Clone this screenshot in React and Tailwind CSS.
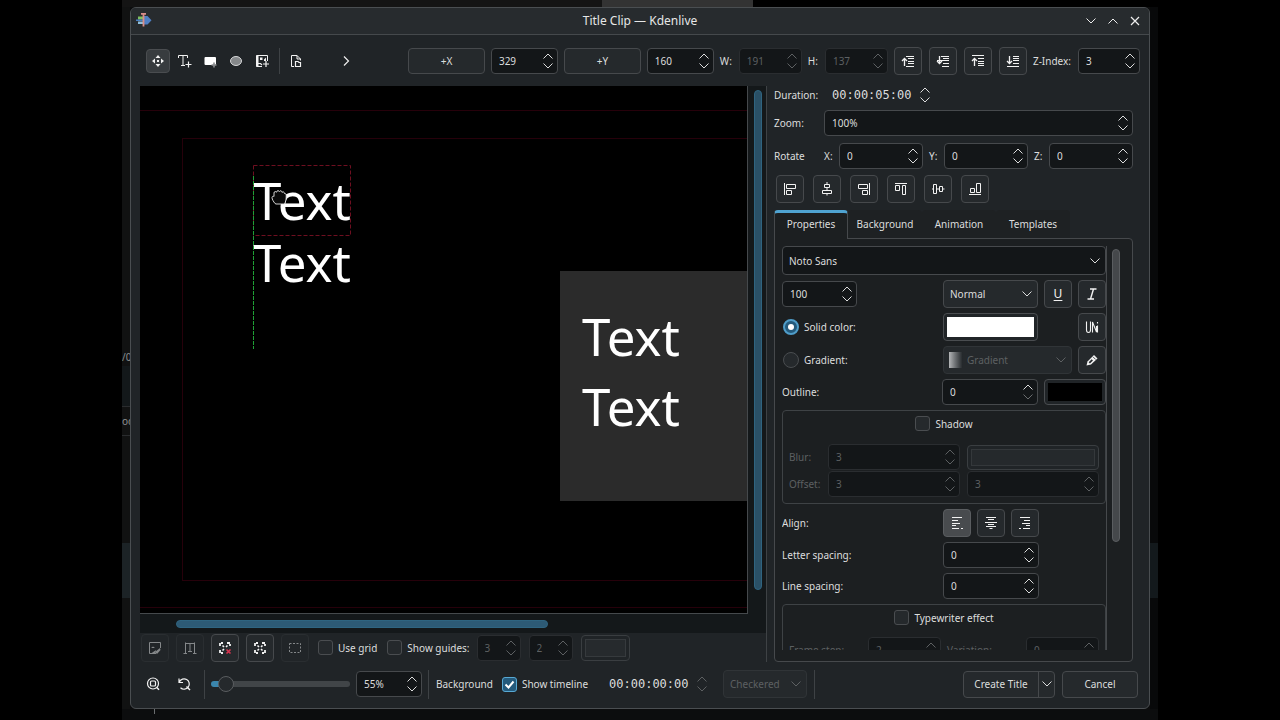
import React, { useState } from 'react';
import clsx from 'clsx';

function Chevron({ up, className }) {
  return (
    <svg viewBox="0 0 10 6" className={clsx('w-2.5 h-1.5 fill-none stroke-current', className)}>
      <path d={up ? 'M0.5 5.5 L5 1 L9.5 5.5' : 'M0.5 0.5 L5 5 L9.5 0.5'} />
    </svg>
  );
}

function Arrows({ disabled, atMin, onStep }) {
  return (
    <span className={clsx('flex flex-col gap-1 shrink-0', disabled ? 'text-[#5d6062]' : 'text-[#dcdddd]')}>
      <button type="button" aria-label="Increase" disabled={disabled} onClick={() => onStep?.(1)} className="block">
        <Chevron up />
      </button>
      <button type="button" aria-label="Decrease" disabled={disabled} onClick={() => onStep?.(-1)} className="block">
        <Chevron className={atMin ? 'text-[#6a6d6f]' : ''} />
      </button>
    </span>
  );
}

function Spin({ id, label, initial, suffix = '', disabled, atMin, className }) {
  const [value, setValue] = useState(initial);

  return (
    <div
      className={clsx(
        'flex items-center h-[26px] pl-[7px] pr-1 rounded border bg-[#131618]',
        disabled ? 'border-[#2a2d30] text-[#5d6062]' : 'border-[#46494c] text-[#dcdddd]',
        className
      )}
    >
      <input
        id={id}
        type="text"
        aria-label={label}
        value={`${value}${suffix}`}
        disabled={disabled}
        onChange={(e) => setValue(parseInt(e.target.value, 10) || 0)}
        className="flex-1 min-w-0 w-0 bg-transparent outline-none"
      />
      <Arrows disabled={disabled} atMin={atMin} onStep={(d) => setValue((v) => v + d)} />
    </div>
  );
}

function IconButton({ label, children, disabled, active, className }) {
  return (
    <button
      type="button"
      aria-label={label}
      title={label}
      disabled={disabled}
      className={clsx(
        'flex items-center justify-center w-7 h-7 shrink-0 rounded border',
        active && 'bg-[#484b4e] border-[#5a5d60] text-[#f2f2f2]',
        !active && !disabled && 'bg-[#25292c] border-[#46494c] text-[#f2f2f2]',
        disabled && 'bg-[#212528] border-[#2a2e31] text-[#85888a]',
        className
      )}
    >
      {children}
    </button>
  );
}

function ToolButton({ label, active, children }) {
  return (
    <button
      type="button"
      aria-label={label}
      title={label}
      className={clsx(
        'flex items-center justify-center size-6 rounded border text-[#f2f2f2]',
        active ? 'bg-[#383c3f] border-[#4a4d50]' : 'border-transparent'
      )}
    >
      {children}
    </button>
  );
}

function Select({ id, label, options, disabled, className, tall, dark, children }) {
  return (
    <div className={clsx('relative', className)}>
      {children}
      <select
        id={id}
        aria-label={label}
        disabled={disabled}
        className={clsx(
          'appearance-none w-full rounded border pr-5 outline-none',
          tall ? 'h-[29px]' : 'h-7',
          dark ? 'bg-[#131618]' : 'bg-[#25292c]',
          children ? 'pl-[23px]' : 'pl-[6px]',
          disabled ? 'border-[#303437] text-[#5d6062] opacity-100' : 'border-[#46494c] text-[#dcdddd]'
        )}
      >
        {options.map((o) => (
          <option key={o}>{o}</option>
        ))}
      </select>
      <Chevron
        className={clsx(
          'absolute right-1.5 top-1/2 -translate-y-1/2 pointer-events-none',
          disabled ? 'text-[#5d6062]' : 'text-[#dcdddd]'
        )}
      />
    </div>
  );
}

function CheckBox({ id, label, defaultChecked }) {
  return (
    <div className="flex items-center gap-[5px]">
      <span className="relative flex size-[15px]">
        <input
          id={id}
          type="checkbox"
          defaultChecked={defaultChecked}
          className="peer appearance-none size-[15px] rounded-[3px] border border-[#4a4d50] bg-[#25292c] checked:bg-[#245a7c] checked:border-[#58a9d4]"
        />
        <svg
          viewBox="0 0 15 15"
          className="absolute inset-0 size-[15px] fill-none stroke-white stroke-2 pointer-events-none opacity-0 peer-checked:opacity-100"
        >
          <path d="M3.5 7.5 L6.5 10.5 L11.5 4.5" />
        </svg>
      </span>
      <label htmlFor={id}>{label}</label>
    </div>
  );
}

function Radio({ id, label, defaultChecked }) {
  return (
    <div className="flex items-center gap-[5px] pl-px">
      <span className="relative flex items-center justify-center size-4">
        <input
          id={id}
          type="radio"
          name="fill"
          defaultChecked={defaultChecked}
          className="peer appearance-none size-4 rounded-full border border-[#4a4d50] bg-[#25292c] checked:bg-[#245a7c] checked:border-2 checked:border-[#4f9dc9]"
        />
        <span className="absolute size-1.5 rounded-full bg-white pointer-events-none opacity-0 peer-checked:opacity-100" />
      </span>
      <label htmlFor={id}>{label}</label>
    </div>
  );
}

function ColorButton({ label, color, disabled, className }) {
  return (
    <button
      type="button"
      aria-label={label}
      disabled={disabled}
      className={clsx(
        'flex p-[3px] rounded border bg-[#202427]',
        disabled ? 'border-[#3a3e41]' : 'border-[#4a4d50]',
        className
      )}
    >
      <span className={clsx('flex-1 self-stretch', color)} />
    </button>
  );
}

function Icon({ children, size = 'size-4' }) {
  return (
    <svg viewBox="0 0 16 16" className={clsx(size, 'fill-none stroke-current')}>
      {children}
    </svg>
  );
}

function TitleBar() {
  return (
    <header className="relative flex items-center justify-end h-[27px] shrink-0 px-2 rounded-t-[5px] bg-[#272b2e] border-b border-[#45494c]">
      <svg viewBox="0 0 18 18" className="absolute left-1 top-[3px] size-[18px]">
        <path d="M3 5.5h6v3H3z" fill="#7fbf5f" />
        <path d="M1 8.5h8V10H1z" fill="#4a7fc0" />
        <path d="M3 10.5h6v2.5H3z" fill="#8fc0dc" />
        <path d="M9 5 H12.5 L16.5 9.3 L12.5 13.5 H9z" fill="#4f7fc4" />
        <path d="M6 2h5v1.8H9.4V15.5H7.6V3.8H6z" fill="#d98d88" />
      </svg>
      <h1 className="absolute inset-x-0 text-center text-[12px] leading-[26px] text-[#e6e7e7] pointer-events-none">
        Title Clip — Kdenlive
      </h1>
      <div className="flex items-center gap-2.5 text-[#eeeeee]">
        <button type="button" aria-label="Minimize" className="w-3"><Chevron className="w-3" /></button>
        <button type="button" aria-label="Maximize" className="w-3"><Chevron up className="w-3" /></button>
        <button type="button" aria-label="Close" className="w-3">
          <svg viewBox="0 0 12 12" className="size-3 fill-none stroke-current">
            <path d="M2 2 L10 10 M10 2 L2 10" strokeWidth="1.2" />
          </svg>
        </button>
      </div>
    </header>
  );
}

// Raise / lower arrows next to a stack of lines
function OrderIcon({ up, edge }) {
  return (
    <Icon>
      <path d={up ? 'M4.5 13 V6 M2 8 L4.5 5.5 L7 8' : 'M4.5 3 V10 M2 8 L4.5 10.5 L7 8'} strokeWidth="1.3" />
      {edge && up && <path d="M2 2.5 H14 M8 5.5 H14 M8 8.5 H14 M8 10.5 H14 M8 12.5 H14" />}
      {edge && !up && <path d="M2 13.5 H14 M8 3.5 H14 M8 5.5 H14 M8 7.5 H14 M8 10.5 H14" />}
      {!edge && up && <path d="M6 3.5 H14 M8 5.5 H14 M8 8.5 H14 M8 10.5 H14 M6 13.5 H14" />}
      {!edge && !up && <path d="M6 3.5 H14 M8 5.5 H14 M2 7.5 H14 M8 10.5 H14 M7 13.5 H14" />}
    </Icon>
  );
}

function Toolbar() {
  return (
    <div className="flex items-center h-[51px] shrink-0 pl-[15px] pr-[9px]">
      <div className="flex items-center gap-0.5">
        <ToolButton label="Selection tool" active>
          <Icon>
            <g className="fill-current stroke-none">
              <path d="M8 2 L10.5 5 H5.5z M8 14 L10.5 11 H5.5z M2 8 L5 5.5 V10.5z M14 8 L11 5.5 V10.5z" />
              <path d="M7 7h2v2H7z" />
            </g>
          </Icon>
        </ToolButton>
        <ToolButton label="Add text">
          <Icon>
            <path d="M2.5 5 V2.5 H11.5 V5 M7 2.5 V12.5 M5 12.5 H9" />
            <path d="M12.5 8.5 V14.5 M9.5 11.5 H15.5" strokeWidth="1.2" />
          </Icon>
        </ToolButton>
        <ToolButton label="Add rectangle">
          <Icon>
            <rect x="2.5" y="4" width="11.5" height="8" rx="1" className="fill-white stroke-none" />
            <path d="M12 9.5 V14.5 M9.5 12 H14.5" stroke="#8a8c8e" strokeWidth="1.6" />
          </Icon>
        </ToolButton>
        <ToolButton label="Add ellipse">
          <Icon>
            <ellipse cx="8" cy="8" rx="5.5" ry="4.5" className="fill-[#85888a]" stroke="#d5d6d7" />
          </Icon>
        </ToolButton>
        <ToolButton label="Add image">
          <Icon>
            <path d="M8 13.5 H2.5 V2.5 H13.5 V8" />
            <path d="M2.5 2.5 H4.5 V13.5 H2.5z M6 4.5 H8.5 V7 H6z M10 6.5 L12 4.5 V8 H10z" className="fill-current stroke-none" />
            <path d="M4 10.5 H6.5 L8 12 M12 8 V14 M9 11 H15" strokeWidth="1.2" />
          </Icon>
        </ToolButton>
      </div>
      <div className="w-px h-[26px] ml-[5px] mr-1 bg-[#3e4245]" />
      <ToolButton label="Open document">
        <Icon>
          <path d="M6 13.5 H3.5 V2.5 H9 L12.5 6 V7.5 M9 2.5 V6 H12.5" />
          <path d="M7.5 13.5 V8.5 H10 L11 9.5 H12.5 V13.5z" strokeWidth="1.2" />
        </Icon>
      </ToolButton>
      <button type="button" aria-label="More tools" className="ml-[26px] mr-[50px] size-6 flex items-center justify-center text-[#eeeeee]">
        <Icon><path d="M6 3.5 L10.5 8 L6 12.5" strokeWidth="1.2" /></Icon>
      </button>

      <div className="flex flex-1 items-center gap-1.5">
        <button type="button" className="flex-1 h-[26px] rounded border border-[#46494c] bg-[#25292c]">+X</button>
        <Spin label="X position" initial={329} className="w-[67px]" />
        <button type="button" className="flex-1 h-[26px] rounded border border-[#46494c] bg-[#25292c]">+Y</button>
        <Spin label="Y position" initial={160} className="w-[67px]" />
        <label htmlFor="item-w" className="pr-px">W:</label>
        <Spin id="item-w" initial={191} disabled className="w-[63px]" />
        <label htmlFor="item-h" className="pr-px">H:</label>
        <Spin id="item-h" initial={137} disabled className="w-[63px]" />
        <div className="flex gap-[7px]">
          <IconButton label="Raise object"><OrderIcon up /></IconButton>
          <IconButton label="Lower object"><OrderIcon /></IconButton>
          <IconButton label="Raise to top"><OrderIcon up edge /></IconButton>
          <IconButton label="Lower to bottom"><OrderIcon edge /></IconButton>
        </div>
        <label htmlFor="z-index" className="pr-px">Z-Index:</label>
        <Spin id="z-index" initial={3} className="w-[62px]" />
      </div>
    </div>
  );
}

const titleItems = [
  { id: 1, pos: 'left-[113px] top-[84px]' },
  { id: 2, pos: 'left-[113px] top-[146px]' },
  { id: 3, pos: 'left-[442px] top-[220px]' },
  { id: 4, pos: 'left-[442px] top-[290px]' },
];

function Canvas() {
  return (
    <div className="relative flex-1 min-w-0 overflow-hidden bg-black border-r border-b border-[#45494c]">
      {/* Safe margins */}
      <div className="absolute left-0 -right-10 top-6 bottom-[5px] border-y border-[#26000a]" />
      <div className="absolute left-[42px] -right-10 top-[52px] bottom-8 border border-[#26000a]" />

      <div className="absolute left-[420px] top-[185px] right-0 h-[230px] bg-[#2b2b2b]" />
      {titleItems.map((item) => (
        <p key={item.id} className={clsx('absolute text-[51px] leading-[60px] text-white', item.pos)}>
          Text
        </p>
      ))}

      {/* Selection frame and snap guide */}
      <svg viewBox="0 0 100 186" className="absolute left-[112px] top-[79px] w-[100px] h-[186px] fill-none">
        <rect x="1.5" y="0.5" width="97" height="70" stroke="#6e0f20" strokeDasharray="4 2" />
        <path d="M1.5 11 V184" stroke="#1fa035" strokeDasharray="4 1" />
      </svg>

      <svg viewBox="0 0 16 18" className="absolute left-[131px] top-[102px] w-4 h-[18px]">
        <path
          d="M4 15.5 C2.5 13.5 1 11.5 1 9.5 C1 8.2 2.5 8 3 8.5 V5 C3 3.2 5 3.2 5.5 4.2 C5.8 2.2 8 2.2 8.3 3.6 C9 2.2 11 2.6 11 4.4 C12 3.4 13.5 4 13.5 5.5 C15 5 15.3 7 15.2 9 C15.2 12 14.5 14 13.5 16 H5z"
          fill="#0a0a0a"
          stroke="#e8e8e8"
          strokeWidth="0.9"
        />
      </svg>
    </div>
  );
}

function CanvasTools() {
  return (
    <div className="flex items-center h-[29px] shrink-0 pl-px">
      <div className="flex gap-[7px]">
        <IconButton label="Show background" disabled>
          <Icon>
            <path d="M2.5 13.5 V2.5 H13.5 V8 M2.5 13.5 H9" />
            <path d="M4 8 L6 6.5 L8 8z M8 12 L13 8 L13.5 10 L10 14z M4 13.5 L9 10 L8 13.5z" className="fill-current stroke-none" />
          </Icon>
        </IconButton>
        <IconButton label="Insert text field" disabled>
          <Icon><path d="M3.5 2.5 V13.5 M12.5 2.5 V13.5 M1.5 13.5 H5 M11 13.5 H14.5 M3.5 3.5 H12.5 M8 3.5 V11.5 M6 11.5 H10" /></Icon>
        </IconButton>
        <IconButton label="Clear selection">
          <Icon>
            <path d="M3 6 V3 H6 M10 3 H13 V6 M3 10 V13 H6" strokeWidth="1.8" strokeDasharray="3 1" />
            <path d="M5.5 5.5 L7 7 M10.5 5.5 L9 7 M5.5 10.5 L7 9" strokeWidth="1.6" />
            <path d="M9.5 9.5 L13.5 13.5 M13.5 9.5 L9.5 13.5" stroke="#d9344f" strokeWidth="1.6" />
          </Icon>
        </IconButton>
        <IconButton label="Select all">
          <Icon>
            <path d="M3 6 V3 H6 M10 3 H13 V6 M3 10 V13 H6 M13 10 V13 H10" strokeWidth="1.8" strokeDasharray="3 1" />
            <path d="M5.5 5.5 L7 7 M10.5 5.5 L9 7 M5.5 10.5 L7 9 M10.5 10.5 L9 9" strokeWidth="1.6" />
          </Icon>
        </IconButton>
        <IconButton label="Select rectangle" disabled>
          <Icon><rect x="2.5" y="3.5" width="11" height="9" strokeDasharray="2 1.5" /></Icon>
        </IconButton>
      </div>
      <div className="ml-[9px]"><CheckBox id="use-grid" label="Use grid" /></div>
      <div className="ml-2.5"><CheckBox id="show-guides" label="Show guides:" /></div>
      <div className="flex items-center gap-2 ml-[7px]">
        <Spin label="Columns" initial={3} disabled className="w-11" />
        <Spin label="Rows" initial={2} disabled className="w-11" />
        <ColorButton label="Guide color" disabled color="bg-[#262a2d] border border-[#363a3d]" className="w-[49px] h-[26px]" />
      </div>
    </div>
  );
}

function Workspace() {
  return (
    <div className="flex flex-1 flex-col min-w-0 pl-[9px] border-r border-[#3e4245]">
      <div className="flex flex-1 min-h-0">
        <Canvas />
        <div className="w-[18px] shrink-0 pl-1.5 pr-1 pt-1 pb-6 bg-[#14181a]">
          <div className="h-full w-2 rounded-full border border-[#2f6480] bg-[#2a5066]" />
        </div>
      </div>
      <div className="flex items-center h-[19px] shrink-0 pl-9 bg-[#14181a]">
        <div className="w-[63%] h-2 rounded-full border border-[#2f6480] bg-[#2d5a75]" />
      </div>
      <CanvasTools />
    </div>
  );
}

const alignIcons = [
  { label: 'Align left', d: 'M2.5 2 V14 M4.5 3.5 H13.5 V7.5 H4.5z M4.5 9.5 H9.5 V13.5 H4.5z' },
  { label: 'Align center', d: 'M8 1 V3 M5.5 3.5 H10.5 V6.5 H5.5z M8 7 V9 M3.5 9.5 H12.5 V12.5 H3.5z M8 13 V14.5' },
  { label: 'Align right', d: 'M13.5 2 V14 M11.5 3.5 H2.5 V7.5 H11.5z M11.5 9.5 H6.5 V13.5 H11.5z' },
  { label: 'Align top', d: 'M2 2.5 H14 M2.5 4.5 H6.5 V9.5 H2.5z M9.5 4.5 H12.5 V13.5 H9.5z' },
  { label: 'Align middle', d: 'M2 8 H3 M3.5 3.5 H6.5 V12.5 H3.5z M7 8 H9 M9.5 5.5 H12.5 V10.5 H9.5z M13 8 H14.5' },
  { label: 'Align bottom', d: 'M2 13.5 H14 M3.5 7.5 H7.5 V11.5 H3.5z M9.5 2.5 H13.5 V11.5 H9.5z' },
];

const tabs = ['Properties', 'Background', 'Animation', 'Templates'];

function Properties() {
  return (
    <div className="flex flex-col gap-[5px] flex-1 min-w-0 overflow-hidden border-r border-[#46494c]">
      <Select label="Font" tall dark options={['Noto Sans']} className="shrink-0" />

      <div className="flex items-center gap-1.5 shrink-0">
        <Spin label="Font size" initial={100} className="w-[75px]" />
        <Select label="Font weight" options={['Normal', 'Bold']} className="w-[95px] ml-auto" />
        <IconButton label="Underline"><span className="text-[12px] underline underline-offset-2">U</span></IconButton>
        <IconButton label="Italic">
          <Icon><path d="M6 3 H12.5 M3.5 13 H10 M9.5 3 L6.5 13" strokeWidth="1.4" /></Icon>
        </IconButton>
      </div>

      <div className="flex items-center shrink-0">
        <Radio id="solid" label="Solid color:" defaultChecked />
        <ColorButton label="Font color" color="bg-white" className="w-[95px] h-7 ml-auto mr-10" />
        <IconButton label="Insert unicode character">
          <Icon>
            <path d="M2.5 2.5 V11 Q2.5 13.5 4.5 13.5 Q6.5 13.5 6.5 11 V2.5 M8.5 13.5 V3 L12.5 13 V7 M13.5 6.5 V13.5 M13.5 3 V4.5" strokeWidth="1.1" />
          </Icon>
        </IconButton>
      </div>

      <div className="flex items-center gap-1.5 shrink-0">
        <div className="mr-auto"><Radio id="gradient" label="Gradient:" /></div>
        <Select label="Gradient preset" disabled options={['Gradient']} className="w-[129px]">
          <span className="absolute left-1.5 top-1.5 w-[14px] h-4 bg-gradient-to-r from-[#b4b6b8] to-[#202427]" />
        </Select>
        <IconButton label="Edit gradient">
          <Icon>
            <path d="M2.5 13.5 L3.5 9.5 L10 3 L13.5 6.5 L7 12.5z" className="fill-current stroke-none" />
            <path d="M5.3 10.8 L8.3 7.8" stroke="#25292c" strokeWidth="1.8" />
            <path d="M9 4.8 L11.7 7.5" stroke="#25292c" strokeWidth="0.8" />
          </Icon>
        </IconButton>
      </div>

      <div className="flex items-center gap-1.5 shrink-0">
        <label htmlFor="outline" className="mr-auto">Outline:</label>
        <Spin id="outline" initial={0} atMin className="w-24" />
        <ColorButton label="Outline color" color="bg-black" className="w-[62px] h-[26px]" />
      </div>

      <fieldset className="shrink-0 px-1.5 pt-[5px] pb-1.5 border border-[#3e4245] rounded">
        <div className="flex justify-center"><CheckBox id="shadow" label="Shadow" /></div>
        <div className="grid grid-cols-[32px_1fr_1fr] items-center gap-x-[7px] gap-y-px mt-[13px] text-[#5d6062]">
          <label htmlFor="blur">Blur:</label>
          <Spin id="blur" initial={3} disabled />
          <ColorButton label="Shadow color" disabled color="bg-[#25292c] border border-[#34383b]" className="h-[25px]" />
          <label htmlFor="offset-x">Offset:</label>
          <Spin id="offset-x" initial={3} disabled />
          <Spin label="Vertical offset" initial={3} disabled />
        </div>
      </fieldset>

      <div className="flex items-center gap-1.5 shrink-0 pr-[67px]">
        <span className="mr-auto">Align:</span>
        <IconButton label="Left" active>
          <Icon><path d="M3 2.5 H13 M3 5.5 H9 M3 8.5 H11 M3 10.5 H7 M3 13.5 H10 M12 13.5 H14" /></Icon>
        </IconButton>
        <IconButton label="Center">
          <Icon><path d="M3 2.5 H13 M5 4.5 H11 M2 7.5 H14 M5 9.5 H11 M3 11.5 H13 M6.5 13.5 H9.5" /></Icon>
        </IconButton>
        <IconButton label="Right">
          <Icon><path d="M3 2.5 H13 M7 5.5 H13 M5 8.5 H13 M9 10.5 H13 M6 13.5 H13 M2 13.5 H4" /></Icon>
        </IconButton>
      </div>

      <div className="flex items-center justify-between shrink-0 pr-[67px]">
        <label htmlFor="letter-spacing">Letter spacing:</label>
        <Spin id="letter-spacing" initial={0} className="w-24" />
      </div>

      <div className="flex items-center justify-between shrink-0 pr-[67px]">
        <label htmlFor="line-spacing">Line spacing:</label>
        <Spin id="line-spacing" initial={0} className="w-24" />
      </div>

      <fieldset className="shrink-0 px-1.5 pt-[5px] pb-1.5 border border-[#3e4245] rounded">
        <div className="flex justify-center"><CheckBox id="typewriter" label="Typewriter effect" /></div>
        <div className="grid grid-cols-4 items-center gap-x-1.5 mt-3 text-[#5d6062]">
          <label htmlFor="frame-step">Frame step:</label>
          <Spin id="frame-step" initial={2} disabled />
          <label htmlFor="variation">Variation:</label>
          <Spin id="variation" initial={0} disabled />
        </div>
      </fieldset>
    </div>
  );
}

function SidePanel() {
  const [tab, setTab] = useState('Properties');

  return (
    <aside className="flex flex-col w-[382px] shrink-0 pl-[7px] pr-4">
      <div className="flex items-center h-[18px] shrink-0">
        <label htmlFor="duration" className="w-[58px]">Duration:</label>
        <input
          id="duration"
          type="text"
          defaultValue="00:00:05:00"
          className="w-[88px] bg-transparent outline-none font-['DejaVu_Sans_Mono'] text-[12px]"
        />
        <Arrows />
      </div>

      <div className="flex items-center shrink-0 mt-1.5">
        <label htmlFor="zoom" className="w-[50px]">Zoom:</label>
        <Spin id="zoom" initial={100} suffix="%" className="flex-1" />
      </div>

      <div className="flex items-center shrink-0 mt-[7px]">
        <span className="w-[50px]">Rotate</span>
        <div className="flex flex-1 gap-1.5">
          {['X', 'Y', 'Z'].map((axis) => (
            <div key={axis} className="flex flex-1 items-center">
              <label htmlFor={`rotate-${axis}`} className="w-[15px]">{axis}:</label>
              <Spin id={`rotate-${axis}`} initial={0} className="flex-1" />
            </div>
          ))}
        </div>
      </div>

      <div className="flex gap-[9px] shrink-0 mt-1.5 pl-0.5">
        {alignIcons.map((icon) => (
          <IconButton key={icon.label} label={icon.label}>
            <Icon><path d={icon.d} /></Icon>
          </IconButton>
        ))}
      </div>

      <div role="tablist" className="flex shrink-0 mt-[7px]">
        {tabs.map((name) => (
          <button
            key={name}
            type="button"
            role="tab"
            aria-selected={name === tab}
            onClick={() => setTab(name)}
            className={clsx(
              'w-[74px] rounded-t',
              name === tab
                ? 'relative z-10 h-[29px] -mb-px pb-1 bg-[#1c1f21] border-x border-[#46494c] border-t-[3px] border-t-[#4fa3d1]'
                : 'h-7 bg-[#1e2123]'
            )}
          >
            {name}
          </button>
        ))}
      </div>

      <div className="flex flex-1 min-h-0 pt-[7px] pb-[11px] pl-[7px] pr-3 rounded-b rounded-tr border border-[#46494c] bg-[#1c1f21]">
        <Properties />
        <div className="w-2 ml-[5px] pt-[3px]">
          <div className="h-[73%] w-2 rounded-full border border-[#5a5d60] bg-[#45484b]" />
        </div>
      </div>
    </aside>
  );
}

function BottomBar() {
  return (
    <footer className="flex items-center h-[46px] shrink-0 pl-3.5 pr-[11px] pb-0.5">
      <button type="button" aria-label="Fit zoom" className="mr-[15px] text-[#f2f2f2]">
        <Icon>
          <circle cx="8" cy="7.5" r="5.5" strokeWidth="1.2" />
          <rect x="5.5" y="5" width="5" height="5" rx="1" strokeWidth="1.2" />
          <path d="M11.8 11.5 L14 13.8" strokeWidth="1.5" />
        </Icon>
      </button>
      <button type="button" aria-label="Original size" className="text-[#f2f2f2]">
        <Icon>
          <path d="M3 2.5 V6.5 H7 M3.3 6 A5.2 5.2 0 1 1 4.5 11.8" strokeWidth="1.2" />
          <path d="M10.5 10.5 L14 14" strokeWidth="1.4" />
        </Icon>
      </button>
      <div className="w-px h-[29px] ml-3 mr-1.5 bg-[#3e4245]" />
      <input
        type="range"
        aria-label="Canvas zoom"
        min="0"
        max="100"
        defaultValue="6"
        className="appearance-none w-[139px] h-4 bg-transparent [&::-webkit-slider-runnable-track]:h-1.5 [&::-webkit-slider-runnable-track]:rounded-full [&::-webkit-slider-runnable-track]:bg-[linear-gradient(to_right,#3b86ad_12px,#414548_12px)] [&::-webkit-slider-thumb]:appearance-none [&::-webkit-slider-thumb]:size-4 [&::-webkit-slider-thumb]:-mt-[5px] [&::-webkit-slider-thumb]:rounded-full [&::-webkit-slider-thumb]:border [&::-webkit-slider-thumb]:border-[#5a5d60] [&::-webkit-slider-thumb]:bg-[#25292c]"
      />
      <Spin label="Zoom level" initial={55} suffix="%" className="w-[66px] ml-1.5" />
      <div className="w-px h-[29px] ml-1.5 mr-[7px] bg-[#3e4245]" />
      <span className="mr-[9px]">Background</span>
      <CheckBox id="show-timeline" label="Show timeline" defaultChecked />
      <input
        type="text"
        aria-label="Timeline position"
        defaultValue="00:00:00:00"
        className="w-[88px] ml-[21px] bg-transparent outline-none font-['DejaVu_Sans_Mono'] text-[12px]"
      />
      <Arrows disabled />
      <Select label="Background pattern" disabled options={['Checkered']} className="w-[84px] ml-4" />
      <div className="w-px h-[29px] ml-[7px] bg-[#3e4245]" />

      <div className="flex ml-auto mr-[7px] h-[27px] rounded border border-[#46494c] bg-[#25292c]">
        <button type="button" className="w-[74px]">Create Title</button>
        <button type="button" aria-label="More actions" className="flex items-center justify-center w-4 border-l border-[#46494c]">
          <Chevron />
        </button>
      </div>
      <button type="button" className="w-[76px] h-[27px] rounded border border-[#46494c] bg-[#25292c]">Cancel</button>
    </footer>
  );
}

// Sliver of the main window that stays visible on the left of the dialog
function LeftSliver() {
  return (
    <div className="flex flex-col w-2 shrink-0 overflow-hidden bg-[#111212] text-[#8c8e8f]">
      <div className="h-[343px]" />
      <p className="h-4 whitespace-nowrap">/0</p>
      <div className="h-10 bg-[#13181a]" />
      <p className="h-[30px] flex items-center border-y border-[#2a2c2e] whitespace-nowrap">od</p>
      <div className="h-[107px]" />
      <div className="h-[55px] bg-[#1c2326]" />
    </div>
  );
}

export default function App() {
  return (
    <div className="h-screen px-[122px] bg-black font-['Noto_Sans',sans-serif] text-[10px] leading-[14px] text-[#dcdddd]">
      <div className="flex flex-col h-full bg-[#0c0d0e]">
        <div className="flex h-[7px] shrink-0 bg-black">
          <div className="w-[480px] bg-[#141414]" />
          <div className="w-[151px] bg-[#333333]" />
        </div>

        <div className="flex flex-1 min-h-0">
          <LeftSliver />
          <main className="flex flex-1 flex-col min-w-0 rounded-md border border-[#4a4e51] bg-[#202427]">
            <TitleBar />
            <Toolbar />
            <div className="flex flex-1 min-h-0">
              <Workspace />
              <SidePanel />
            </div>
            <BottomBar />
          </main>
          <div className="flex flex-col w-2 shrink-0 bg-[#08090a]">
            <div className="h-[536px]" />
            <div className="h-[55px] bg-[#13191c]" />
          </div>
        </div>

        <div className="h-[11px] shrink-0 pl-8">
          <div className="w-px h-[5px] bg-[#6a6d6f]" />
        </div>
      </div>
    </div>
  );
}
